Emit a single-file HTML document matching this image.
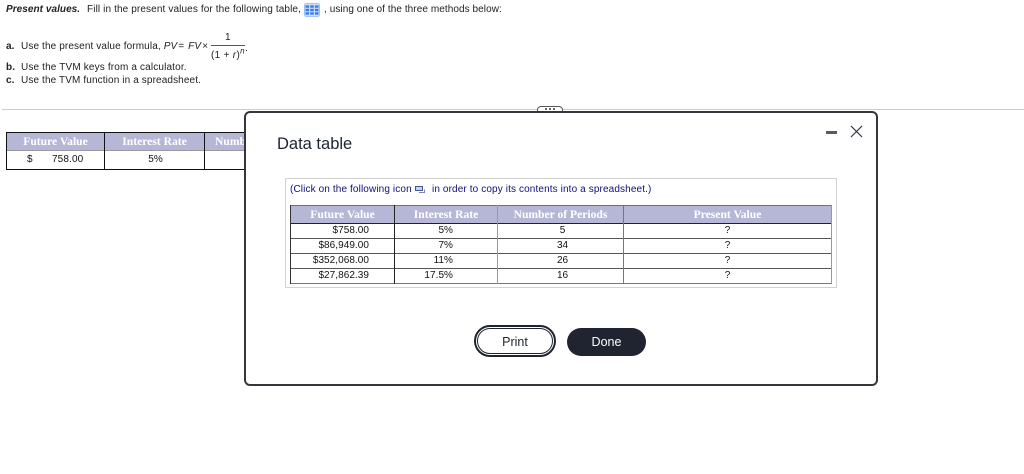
<!DOCTYPE html>
<html><head><meta charset="utf-8"><style>
html,body{margin:0;padding:0;background:#fff}
body{width:1024px;height:474px;position:relative;overflow:hidden;font-family:"Liberation Sans",sans-serif;font-size:10px;color:#222}
.t{position:absolute;white-space:nowrap;line-height:12px;letter-spacing:.12px}
.b{position:absolute}
.h{position:absolute;background:#b6b7d6;color:#fff;font-family:"Liberation Serif",serif;font-weight:bold;font-size:11.6px;text-align:center;line-height:18px;white-space:nowrap;overflow:hidden}
.c{position:absolute;text-align:center;white-space:nowrap;line-height:12px;color:#111}
.r{position:absolute;text-align:right;white-space:nowrap;line-height:12px;color:#111;letter-spacing:.05px}
</style></head><body>
<div class="t" style="left:6px;top:4px;font-weight:bold;font-style:italic;letter-spacing:.05px">Present values.</div>
<div class="t" style="left:87px;top:4px">Fill in the present values for the following table,</div>
<svg class="b" style="left:304px;top:3px" width="16" height="14" viewBox="0 0 16 15" preserveAspectRatio="none"><rect x=".5" y=".5" width="15" height="14" rx="2" fill="#cfe0f8" stroke="#9cc0f0"/><g fill="#3d7de2"><rect x="1.5" y="2.5" width="3.6" height="2.6"/><rect x="6.2" y="2.5" width="3.6" height="2.6"/><rect x="10.9" y="2.5" width="3.6" height="2.6"/><rect x="1.5" y="6.2" width="3.6" height="2.6"/><rect x="6.2" y="6.2" width="3.6" height="2.6"/><rect x="10.9" y="6.2" width="3.6" height="2.6"/><rect x="1.5" y="9.9" width="3.6" height="2.6"/><rect x="6.2" y="9.9" width="3.6" height="2.6"/><rect x="10.9" y="9.9" width="3.6" height="2.6"/></g></svg>
<div class="t" style="left:324px;top:4px;letter-spacing:.07px">, using one of the three methods below:</div>
<div class="t" style="left:6px;top:41px;font-weight:bold">a.</div>
<div class="t" style="left:21px;top:41px">Use the present value formula, <i>PV</i><span style="margin:0 1px">=</span> <i>FV</i><span style="margin-left:1px">×</span></div>
<div class="t" style="left:225px;top:32px">1</div>
<div class="b" style="left:211px;top:45px;width:34px;height:1px;background:#555"></div>
<div class="t" style="left:211px;top:50px;letter-spacing:.3px">(1 + <i>r</i>)<sup style="font-size:8px;line-height:0"><i>n</i></sup></div>
<div class="t" style="left:245px;top:43px">.</div>
<div class="t" style="left:6px;top:62px;font-weight:bold">b.</div>
<div class="t" style="left:21px;top:62px;letter-spacing:.15px">Use the TVM keys from a calculator.</div>
<div class="t" style="left:6px;top:75px;font-weight:bold">c.</div>
<div class="t" style="left:21px;top:75px">Use the TVM function in a spreadsheet.</div>
<div class="b" style="left:2px;top:109px;width:1022px;height:1px;background:#cfcbcb"></div>

<div class="b" style="left:6px;top:132px;width:260px;height:38px;border:1px solid #111;box-sizing:border-box"></div>
<div class="h" style="left:7px;top:133px;width:97px;height:17px">Future Value</div>
<div class="h" style="left:105px;top:133px;width:99px;height:17px">Interest Rate</div>
<div class="h" style="left:205px;top:133px;width:60px;height:17px;text-align:left;padding-left:10px">Number of Periods</div>
<div class="b" style="left:7px;top:150px;width:258px;height:1px;background:#999"></div>
<div class="b" style="left:104px;top:132px;width:1px;height:38px;background:#111"></div>
<div class="b" style="left:204px;top:132px;width:1px;height:38px;background:#111"></div>
<div class="t" style="left:27px;top:154px;color:#111">$</div>
<div class="t" style="left:52px;top:154px;color:#111">758.00</div>
<div class="c" style="left:106px;top:154px;width:99px">5%</div>

<div class="b" style="left:537px;top:106px;width:26px;height:8px;background:#fff;border:1px solid #555;border-radius:4px 4px 0 0;box-sizing:border-box"></div>
<div class="b" style="left:244px;top:111px;width:634px;height:275px;box-sizing:border-box;background:#fff;border:2px solid #33363b;border-radius:6px"></div>
<div class="b" style="left:545px;top:108px;width:2px;height:2px;background:#667;box-shadow:4px 0 #667,8px 0 #667"></div>
<div class="t" style="left:277px;top:135px;font-size:16.5px;line-height:18px;letter-spacing:0;color:#1d2433">Data table</div>
<div class="b" style="left:826px;top:131px;width:11px;height:3px;background:#555a63"></div>
<svg class="b" style="left:850px;top:125px" width="13" height="13" viewBox="0 0 13 13"><path d="M1 1L12 12M12 1L1 12" stroke="#333a44" stroke-width="1.2" fill="none"/></svg>

<div class="b" style="left:285px;top:178px;width:552px;height:110px;box-sizing:border-box;border:1px solid #d2d2d2"></div>
<div class="t" style="left:290px;top:184px;color:#10107a">(Click on the following icon</div>
<svg class="b" style="left:414px;top:185px" width="12" height="9" viewBox="0 0 12 9"><rect x="1.5" y="1.5" width="7" height="4" fill="#c8d2ec" stroke="#44578f"/><path d="M5 7.5H10.5V4.5" fill="none" stroke="#7885b2"/></svg>
<div class="t" style="left:432px;top:184px;color:#10107a">in order to copy its contents into a spreadsheet.)</div>

<div class="h" style="left:291px;top:206px;width:103px;height:17px">Future Value</div>
<div class="h" style="left:395px;top:206px;width:102px;height:17px">Interest Rate</div>
<div class="h" style="left:498px;top:206px;width:125px;height:17px">Number of Periods</div>
<div class="h" style="left:624px;top:206px;width:207px;height:17px">Present Value</div>
<div class="b" style="left:290px;top:205px;width:542px;height:1px;background:#6d6d84"></div>
<div class="b" style="left:290px;top:223px;width:542px;height:1px;background:#222"></div>
<div class="b" style="left:290px;top:238px;width:542px;height:1px;background:#555"></div>
<div class="b" style="left:290px;top:253px;width:542px;height:1px;background:#555"></div>
<div class="b" style="left:290px;top:268px;width:542px;height:1px;background:#555"></div>
<div class="b" style="left:290px;top:283px;width:542px;height:1px;background:#777"></div>
<div class="b" style="left:290px;top:205px;width:1px;height:79px;background:#333"></div>
<div class="b" style="left:394px;top:205px;width:1px;height:79px;background:#222"></div>
<div class="b" style="left:497px;top:205px;width:1px;height:79px;background:#999"></div>
<div class="b" style="left:623px;top:205px;width:1px;height:79px;background:#777"></div>
<div class="b" style="left:831px;top:205px;width:1px;height:79px;background:#999"></div>

<div class="r" style="left:291px;top:225px;width:78px">$758.00</div>
<div class="r" style="left:291px;top:240px;width:78px">$86,949.00</div>
<div class="r" style="left:291px;top:255px;width:78px">$352,068.00</div>
<div class="r" style="left:291px;top:270px;width:78px">$27,862.39</div>
<div class="r" style="left:395px;top:225px;width:58px">5%</div>
<div class="r" style="left:395px;top:240px;width:58px">7%</div>
<div class="r" style="left:395px;top:255px;width:58px">11%</div>
<div class="r" style="left:395px;top:270px;width:58px">17.5%</div>
<div class="c" style="left:498px;top:225px;width:129px">5</div>
<div class="c" style="left:498px;top:240px;width:129px">34</div>
<div class="c" style="left:498px;top:255px;width:129px">26</div>
<div class="c" style="left:498px;top:270px;width:129px">16</div>
<div class="c" style="left:624px;top:225px;width:207px">?</div>
<div class="c" style="left:624px;top:240px;width:207px">?</div>
<div class="c" style="left:624px;top:255px;width:207px">?</div>
<div class="c" style="left:624px;top:270px;width:207px">?</div>

<div class="b" style="left:474px;top:325px;width:82px;height:32px;box-sizing:border-box;border:2px solid #1f2430;border-radius:16px"></div>
<div class="b" style="left:477px;top:328px;width:76px;height:26px;box-sizing:border-box;border:1px solid #1f2430;border-radius:13px;text-align:center;font-size:12.5px;line-height:26px;color:#1f2430">Print</div>
<div class="b" style="left:567px;top:328px;width:79px;height:28px;background:#1f2430;border-radius:14px;text-align:center;font-size:12.5px;line-height:28px;color:#fff">Done</div>
</body></html>
